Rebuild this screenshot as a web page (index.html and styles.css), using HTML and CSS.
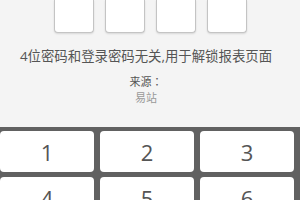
FILE: index.html
```html
<!DOCTYPE html>
<html lang="zh-CN">
<head>
  <meta charset="UTF-8">
  <title>设置解锁密码</title>
  <link rel="stylesheet" href="styles.css">
</head>
<body>

<div class="top">
  <div class="pin-boxes">
    <div class="pin-box"></div>
    <div class="pin-box"></div>
    <div class="pin-box"></div>
    <div class="pin-box"></div>
  </div>

  <div class="info">
    <p class="tip">4位密码和登录密码无关,用于解锁报表页面</p>
    <p class="source" lang="zh-TW">来源：</p>
    <p class="site">易站</p>
  </div>
</div>

<div class="keypad">
  <button class="key">1</button>
  <button class="key">2</button>
  <button class="key">3</button>
  <button class="key">4</button>
  <button class="key">5</button>
  <button class="key">6</button>
</div>

</body>
</html>
```

FILE: styles.css
```css
body {
  margin: 0;
  font-family: "Open Sans", "Noto Sans CJK SC", sans-serif;
  background-color: #f4f4f4;
}

.top {
  height: 127px;
  text-align: center;
}

.pin-boxes {
  display: flex;
  justify-content: center;
  gap: 11px;
}

.pin-box {
  width: 40px;
  height: 33px;
  box-sizing: border-box;
  background-color: #fff;
  border: 1px solid #c4c4c4;
  border-top: none;
  border-radius: 0 0 4px 4px;
  box-shadow: 0 1px 2px rgba(0, 0, 0, 0.12);
}

.info {
  padding-right: 8px;
}

.tip {
  margin: 13px 0 0;
  font-size: 13.4px;
  line-height: 20px;
  color: #555;
}

.source {
  margin: 7px 0 0;
  font-family: "Noto Sans CJK TC", sans-serif;
  font-size: 11px;
  line-height: 16px;
  color: #555;
}

.site {
  margin: 0;
  font-family: "Noto Sans CJK SC", sans-serif;
  font-size: 11px;
  line-height: 16px;
  color: #999;
}

.keypad {
  display: grid;
  grid-template-columns: repeat(3, 1fr);
  column-gap: 6px;
  row-gap: 5px;
  padding: 4px 6px 10px 0;
  background-color: #616161;
}

.key {
  height: 41px;
  border: none;
  border-radius: 4px;
  background-color: #fff;
  font-family: "Open Sans", sans-serif;
  font-size: 22px;
  color: #555;
  padding: 0;
}
```
